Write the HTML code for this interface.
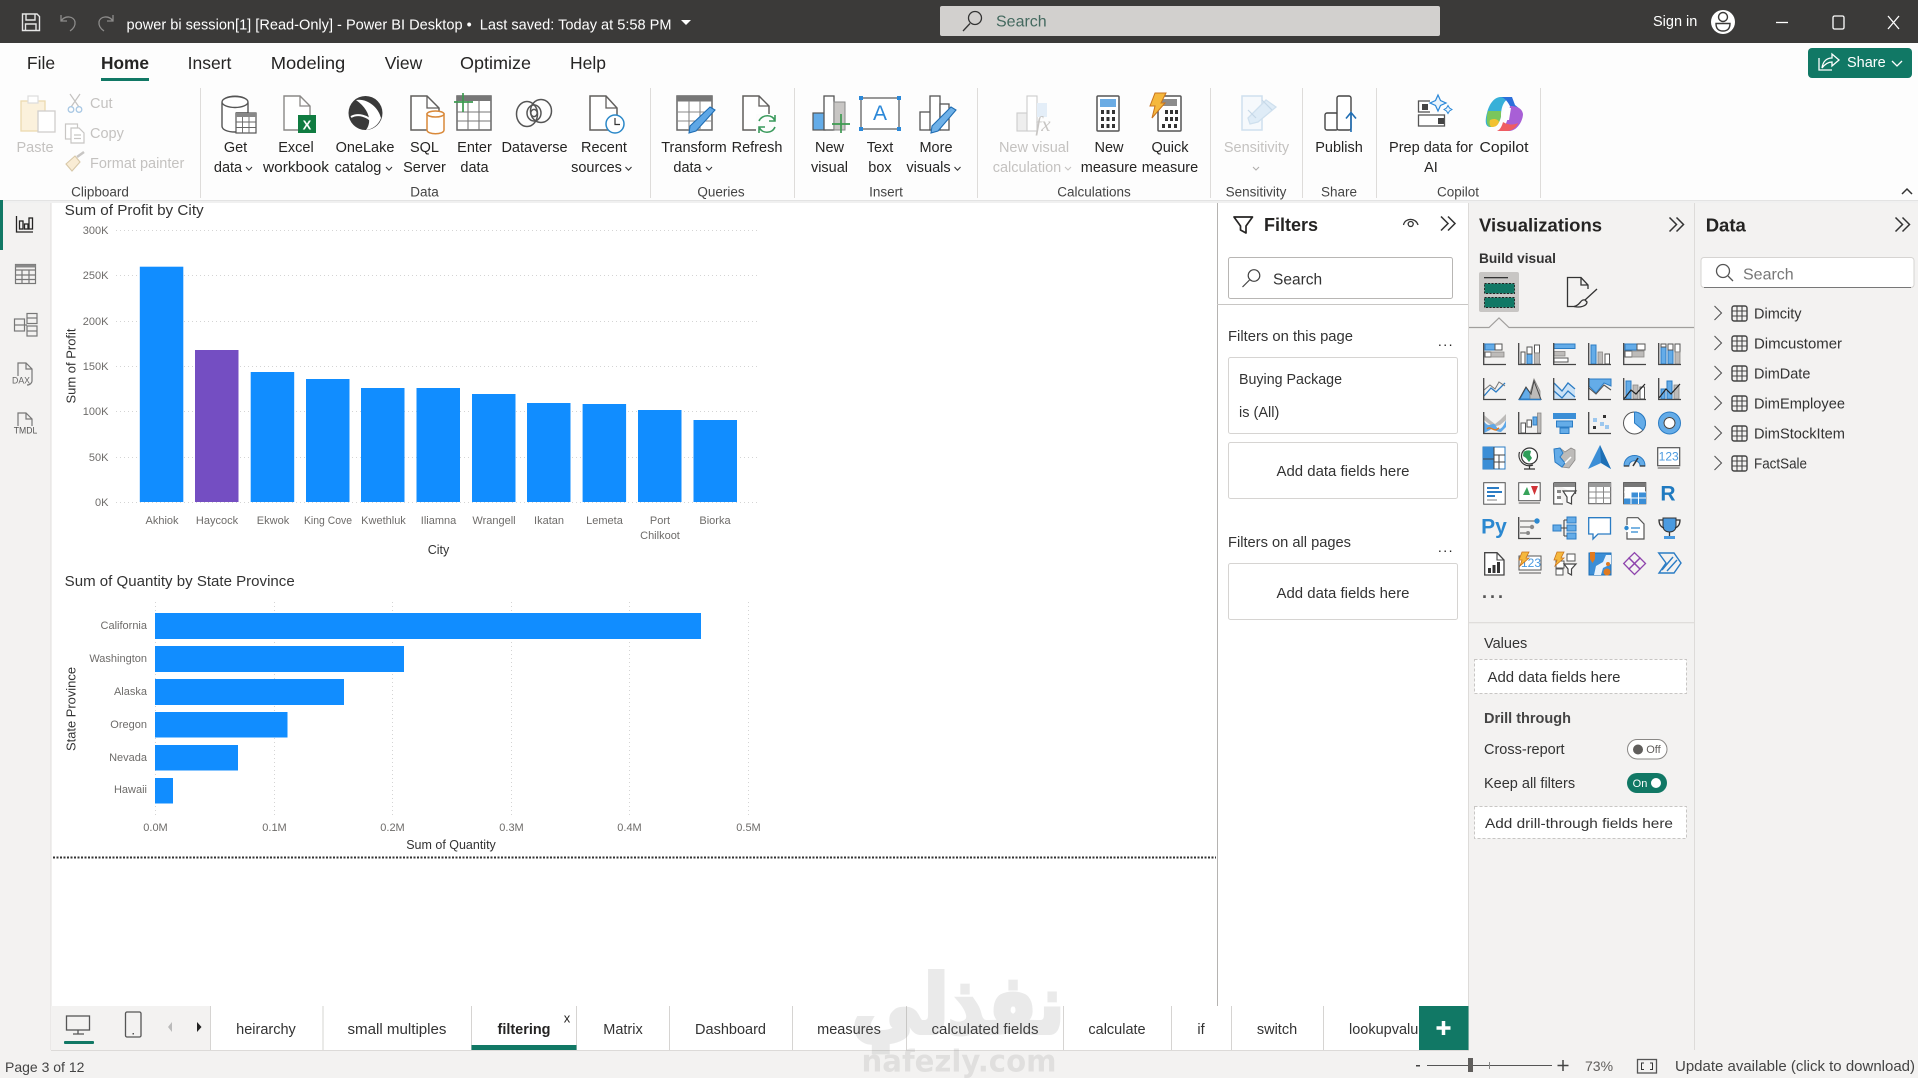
<!DOCTYPE html>
<html lang="en"><head><meta charset="utf-8"><title>Power BI Desktop</title>
<style>
html,body{margin:0;padding:0;background:#fff;width:1918px;height:1078px;overflow:hidden}
svg{display:block}
text{font-family:"Liberation Sans","DejaVu Sans",sans-serif;dominant-baseline:central;fill:#252423;font-size:14.5px}
text:not([transform]):not(.gl):not(.h):not(.at):not(.n){transform:translateY(1px)}
.m{text-anchor:middle}.e{text-anchor:end}
.d{fill:#c4c2c0}
.gl{font-size:13.5px;fill:#444}
.tab{font-size:14.5px;fill:#333;text-anchor:middle}
.ax{font-size:11px;fill:#6e6c6a}
.at{font-size:12.5px;fill:#333}
.ct{font-size:14.5px;fill:#333}
.h{font-weight:bold;font-size:18.5px;fill:#252423}
.f{font-size:14.5px;fill:#333}
.k{stroke:#444;fill:none;stroke-width:1.3}
.b{fill:#64ace8;stroke:#2b7cc4;stroke-width:1}
.g{fill:#bdbbb9;stroke:#8a8886;stroke-width:.8}
.w{fill:#fff;stroke:#555;stroke-width:1}
.gr{stroke:#d4d4d4;stroke-width:1;stroke-dasharray:1 3}
.bar{fill:#118dff}
.chev{fill:none;stroke:#333;stroke-width:1.1}
</style></head><body>
<svg xmlns="http://www.w3.org/2000/svg" width="1918" height="1078" viewBox="0 0 1918 1078">
<defs>
<path id="cv" d="M-3-2L0 1.2 3-2" class="chev"/>
<g id="tbl"><rect x="0" y="0" width="15" height="15" rx="2" fill="none" stroke="#444" stroke-width="1.4"/><path d="M0 5H15M0 10H15M5 0V15M10 0V15" stroke="#444" stroke-width="1.1"/></g>
<path id="dbl" d="M-7-7L0 0-7 7M0-7L7 0 0 7" fill="none" stroke="#333" stroke-width="1.5"/>
<path id="arr" d="M-3.5-7L3.5 0-3.5 7" fill="none" stroke="#555" stroke-width="1.1"/>
</defs>

<!-- base -->
<rect width="1918" height="1078" fill="#fff"/>
<rect x="0" y="0" width="1918" height="43" fill="#3b3a39"/>

<!-- side rail and panes -->
<rect x="0" y="200" width="51" height="850" fill="#f3f2f1"/>
<rect x="50.5" y="200" width="1" height="850" fill="#e1dfdd"/>
<rect x="1217" y="200" width="1" height="806" fill="#b5b3b1"/>
<rect x="1469" y="200" width="449" height="850" fill="#f3f2f1"/>
<rect x="1468" y="200" width="1" height="850" fill="#dddbd9"/>
<rect x="1694" y="200" width="1" height="850" fill="#dddbd9"/>
<rect x="0" y="1050" width="1918" height="28" fill="#f3f2f1"/>
<rect x="51" y="1050" width="1418" height="1" fill="#dcdad8"/>
<rect x="51" y="1006" width="160" height="44" fill="#f3f2f1"/>

<!-- ribbon -->
<rect x="0" y="43" width="1918" height="157" fill="#fdfdfd"/>
<rect x="0" y="200" width="1918" height="1" fill="#e3e3e3"/>
<rect x="0" y="201" width="1918" height="2" fill="#f0f0f0"/>

<!-- title bar -->
<g fill="none" stroke="#e6e6e6" stroke-width="1.4">
<path d="M22.5 14H37L39.5 16.5V30.5H22.5Z"/><path d="M26 14V20H35V14M25.5 30.5V24H36V30.5"/>
</g>
<g fill="none" stroke="#8d8c8b" stroke-width="1.3">
<path d="M61 15V21H67M61 21C65 15 74 16 75 22 75.5 26 73 29 70 31"/>
<path d="M113 15V21H107M113 21C109 15 100 16 99 22 98.5 26 101 29 104 31"/>
</g>
<text x="126.5" y="25" class="n" style="fill:#fff;font-size:15px" textLength="545" lengthAdjust="spacingAndGlyphs">power bi session[1] [Read-Only] - Power BI Desktop •&#160;&#160;Last saved: Today at 5:58 PM</text>
<path d="M681 20H691L686 25Z" fill="#fff"/>
<rect x="940" y="6" width="500" height="30" rx="2" fill="#d2d0ce"/>
<g fill="none" stroke="#333" stroke-width="1.3"><circle cx="975" cy="18" r="6.5"/><path d="M970 23.5L963 31"/></g>
<text x="996" y="22" class="n" style="font-size:16px;fill:#44695f">Search</text>
<text x="1653" y="22" class="n" style="fill:#fff;font-size:14.5px">Sign in</text>
<circle cx="1723" cy="22" r="12" fill="#fff"/>
<g fill="none" stroke="#3b3a39" stroke-width="1.4"><circle cx="1723" cy="17" r="4.5"/><path d="M1716 23.5H1730C1730 29 1727 31 1723 31S1716 29 1716 23.5Z"/></g>
<g stroke="#fff" stroke-width="1.3" fill="none">
<path d="M1776 22.5H1788"/><rect x="1833" y="16" width="11" height="13" rx="1.5"/><path d="M1888 16L1899 29M1899 16L1888 29"/>
</g>

<!-- tabs -->
<text x="41" y="63" class="m n" style="font-size:17.5px">File</text>
<text x="125" y="63" class="m n" style="font-size:17.5px;font-weight:bold" textLength="48" lengthAdjust="spacingAndGlyphs">Home</text>
<text x="209.5" y="63" class="m n" style="font-size:17.5px">Insert</text>
<text x="308" y="63" class="m n" style="font-size:17.5px" textLength="74.5" lengthAdjust="spacingAndGlyphs">Modeling</text>
<text x="403.5" y="63" class="m n" style="font-size:17.5px">View</text>
<text x="495.5" y="63" class="m n" style="font-size:17.5px" textLength="71" lengthAdjust="spacingAndGlyphs">Optimize</text>
<text x="588" y="63" class="m n" style="font-size:17.5px">Help</text>
<rect x="101" y="78" width="48" height="3" fill="#117865"/>

<!-- share -->
<rect x="1808" y="48" width="104" height="30" rx="4" fill="#117865"/>
<g fill="none" stroke="#fff" stroke-width="1.3"><path d="M1819 58V70H1832M1822 68C1823 61 1827 58 1832 58V54L1839 60 1832 66V62C1828 62 1825 64 1822 68Z"/><path d="M1892 61L1897 66 1902 61"/></g>
<text x="1847" y="63" class="n" style="fill:#fff;font-size:14.5px">Share</text>

<!-- ribbon dividers -->
<g fill="#dedcda">
<rect x="200" y="88" width="1" height="110"/><rect x="650" y="88" width="1" height="110"/><rect x="794" y="88" width="1" height="110"/>
<rect x="977" y="88" width="1" height="110"/><rect x="1210" y="88" width="1" height="110"/><rect x="1302" y="88" width="1" height="110"/>
<rect x="1376" y="88" width="1" height="110"/><rect x="1540" y="88" width="1" height="110"/>
</g>
<path d="M1902 194L1907 189 1912 194" fill="none" stroke="#333" stroke-width="1.5"/>

<!-- ribbon labels -->
<text x="35" y="147" class="m d">Paste</text>
<text x="90" y="103" class="d">Cut</text>
<text x="90" y="133" class="d">Copy</text>
<text x="90" y="163" class="d">Format painter</text>
<text x="100" y="192" class="m gl">Clipboard</text>
<text x="235.5" y="147" class="m">Get</text><text x="228" y="167" class="m">data</text><use href="#cv" x="249" y="169"/>
<text x="296" y="147" class="m">Excel</text><text x="296" y="167" class="m" textLength="66" lengthAdjust="spacingAndGlyphs">workbook</text>
<text x="365" y="147" class="m">OneLake</text><text x="358" y="167" class="m">catalog</text><use href="#cv" x="389" y="169"/>
<text x="424.5" y="147" class="m">SQL</text><text x="424.5" y="167" class="m">Server</text>
<text x="474.5" y="147" class="m">Enter</text><text x="474.5" y="167" class="m">data</text>
<text x="534.5" y="147" class="m">Dataverse</text>
<text x="604" y="147" class="m">Recent</text><text x="596.5" y="167" class="m">sources</text><use href="#cv" x="628.5" y="169"/>
<text x="424.5" y="192" class="m gl">Data</text>
<text x="694" y="147" class="m">Transform</text><text x="687.5" y="167" class="m">data</text><use href="#cv" x="709" y="169"/>
<text x="757" y="147" class="m">Refresh</text>
<text x="721" y="192" class="m gl">Queries</text>
<text x="829.5" y="147" class="m">New</text><text x="829.5" y="167" class="m">visual</text>
<text x="880" y="147" class="m">Text</text><text x="880" y="167" class="m">box</text>
<text x="936" y="147" class="m">More</text><text x="928.5" y="167" class="m">visuals</text><use href="#cv" x="957.5" y="169"/>
<text x="886" y="192" class="m gl">Insert</text>
<text x="1034" y="147" class="m d">New visual</text><text x="1027" y="167" class="m d">calculation</text>
<path d="M1065 167L1068 170 1071 167" fill="none" stroke="#c4c2c0" stroke-width="1.1"/>
<text x="1109" y="147" class="m">New</text><text x="1109" y="167" class="m">measure</text>
<text x="1170" y="147" class="m">Quick</text><text x="1170" y="167" class="m">measure</text>
<text x="1094" y="192" class="m gl">Calculations</text>
<text x="1256.5" y="147" class="m d">Sensitivity</text>
<path d="M1253 167L1256 170 1259 167" fill="none" stroke="#b0aeac" stroke-width="1.1"/>
<text x="1256" y="192" class="m gl">Sensitivity</text>
<text x="1339" y="147" class="m">Publish</text><text x="1339" y="192" class="m gl">Share</text>
<text x="1431" y="147" class="m" textLength="84" lengthAdjust="spacingAndGlyphs">Prep data for</text><text x="1431" y="167" class="m">AI</text>
<text x="1504" y="147" class="m" textLength="49" lengthAdjust="spacingAndGlyphs">Copilot</text><text x="1458" y="192" class="m gl">Copilot</text>

<!-- clipboard icons -->
<rect x="21" y="101" width="24" height="30" fill="#fbf1dc" stroke="#ecd9b0" stroke-width="1.3"/>
<rect x="28" y="96" width="10" height="7" fill="#fff" stroke="#ddd" stroke-width="1.2"/>
<rect x="38" y="111" width="17" height="21" fill="#fff" stroke="#d0cecc" stroke-width="1.3"/>
<g fill="none" stroke="#c4c2c0" stroke-width="1.2"><path d="M70 94L79 107M80 94L71 107"/></g>
<g fill="none" stroke="#a9c8e4" stroke-width="1.3"><circle cx="71" cy="109.5" r="2.8"/><circle cx="79" cy="109.5" r="2.8"/></g>
<g fill="#fff" stroke="#c8c6c4" stroke-width="1.2"><rect x="65.5" y="124" width="12" height="15"/><path d="M71 128H79L84 133V143H71Z"/><path d="M74 135H81M74 138.5H81" fill="none"/></g>
<path d="M66 164L75 156 80 162 72 171Z" fill="#f9ecd4" stroke="#d8c8a8" stroke-width="1.1"/><path d="M77 157L84 152" stroke="#c8c6c4" stroke-width="2.5"/>

<!-- Get data -->
<g fill="#fff" stroke="#555" stroke-width="1.4"><path d="M222 103V126C222 130 228 132 235 132H240V103"/><path d="M222 103C222 94 248 94 248 103V113H236"/><ellipse cx="235" cy="102" rx="13" ry="5.5"/></g>
<rect x="236" y="113" width="20" height="20" fill="#fff" stroke="#555" stroke-width="1.2"/><rect x="236" y="113" width="20" height="4" fill="#888"/><path d="M236 122H256M236 127.5H256M242.5 117V133M249 117V133" stroke="#666" stroke-width=".9"/>
<!-- Excel -->
<path d="M284 96H300L310 106V130H284Z" fill="#fff" stroke="#8a8886" stroke-width="1.4"/><path d="M300 96V106H310" fill="none" stroke="#8a8886" stroke-width="1.3"/>
<rect x="298" y="115" width="18" height="18" fill="#107c41"/><text x="307" y="124" class="m" style="fill:#fff;font-size:13px;font-weight:bold">X</text>
<!-- OneLake -->
<circle cx="365.5" cy="113" r="17" fill="#3a3a3a"/>
<path d="M356 100C366 98 378 106 381 118 378 126 372 129 366 130 372 122 370 110 356 100Z" fill="#fff"/>
<path d="M351 117C358 113 368 116 372 122" fill="none" stroke="#fff" stroke-width="2"/>
<!-- SQL -->
<path d="M411 96H427L439 108V130H411Z" fill="#fff" stroke="#605e5c" stroke-width="1.5"/><path d="M427 96V108H439" fill="none" stroke="#605e5c" stroke-width="1.3"/>
<path d="M427 114V130C427 135 444 135 444 130V114Z" fill="#fff" stroke="#d9893a" stroke-width="1.5"/><ellipse cx="435.5" cy="114" rx="8.5" ry="3" fill="#fff" stroke="#d9893a" stroke-width="1.5"/>
<!-- Enter data -->
<rect x="457" y="96" width="34" height="34" fill="#fff" stroke="#666" stroke-width="1.5"/><rect x="457" y="96" width="34" height="5" fill="#777"/>
<path d="M457 112H491M457 121H491M468 101V130M479 101V130" stroke="#777" stroke-width="1.1"/>
<path d="M463 93V112M454 102H473" stroke="#3d9a50" stroke-width="1.7"/>
<!-- Dataverse -->
<g fill="none" stroke="#555" stroke-width="1.5"><ellipse cx="527" cy="114" rx="10.5" ry="12.5"/><ellipse cx="541" cy="111" rx="10.5" ry="11.5"/><ellipse cx="534" cy="113" rx="7" ry="8"/><ellipse cx="534" cy="113" rx="3.2" ry="3.6"/></g>
<!-- Recent -->
<path d="M590 96H606L617 108V130H590Z" fill="#fff" stroke="#605e5c" stroke-width="1.5"/><path d="M606 96V108H617" fill="none" stroke="#605e5c" stroke-width="1.3"/>
<circle cx="615" cy="124" r="9" fill="#fff" stroke="#2b88c8" stroke-width="1.5"/><path d="M615 118V124.5H620" fill="none" stroke="#333" stroke-width="1.2"/>
<!-- Transform -->
<rect x="677" y="96" width="35" height="34" fill="#fff" stroke="#666" stroke-width="1.5"/><rect x="677" y="96" width="35" height="5.5" fill="#777"/>
<path d="M677 112H712M677 121H712M689 101V130M700 101V130" stroke="#888" stroke-width="1.1"/>
<path d="M710 107L715 110 696 131 689 133 690 126Z" fill="#5ea7e6" stroke="#1f6db3" stroke-width="1.1"/>
<!-- Refresh -->
<path d="M743 96H759L769 106V130H743Z" fill="#fff" stroke="#605e5c" stroke-width="1.5"/><path d="M759 96V106H769" fill="none" stroke="#605e5c" stroke-width="1.3"/>
<rect x="756" y="114" width="22" height="20" fill="#fdfdfd"/>
<g fill="none" stroke="#3a9a5c" stroke-width="1.6"><path d="M759 121C762 114 773 114 775 121M775 127C772 134 762 134 759 127M775 115V121H769M759 133V127H765"/></g>

<!-- New visual -->
<rect x="813" y="113" width="12" height="17" fill="#64ace8" stroke="#555" stroke-width="1.2"/>
<rect x="824" y="96" width="10" height="34" fill="#fff" stroke="#555" stroke-width="1.3"/>
<rect x="834" y="102" width="11" height="28" fill="#c8c6c4" stroke="#888" stroke-width="1"/>
<path d="M841 114V133M832 124H850" stroke="#3d9a50" stroke-width="1.7"/>
<!-- Text box -->
<rect x="861" y="98" width="38" height="31" fill="#fff" stroke="#555" stroke-width="1.2"/>
<g fill="#2b88d8"><rect x="859" y="96" width="4" height="4"/><rect x="897" y="96" width="4" height="4"/><rect x="859" y="127" width="4" height="4"/><rect x="897" y="127" width="4" height="4"/></g>
<text x="880" y="112.5" class="m" style="font-size:21px;fill:#2b88d8">A</text>
<!-- More visuals -->
<g fill="#fff" stroke="#555" stroke-width="1.3"><rect x="920" y="112" width="11" height="18"/><rect x="930" y="96" width="10" height="34"/><rect x="940" y="104" width="9" height="26"/></g>
<path d="M951 107L956 110 938 131 931 133 932 126Z" fill="#6fb1e8" stroke="#1f6db3" stroke-width="1.1"/>
<!-- New visual calc (disabled) -->
<rect x="1017" y="113" width="11" height="18" fill="#eee" stroke="#ccc" stroke-width="1.1"/>
<rect x="1027" y="96" width="10" height="35" fill="#fff" stroke="#ccc" stroke-width="1.1"/>
<rect x="1037" y="103" width="10" height="14" fill="#e4eef8"/>
<text x="1043" y="123" class="m" style="font-family:'Liberation Serif',serif;font-style:italic;font-size:21px;fill:#c8c6c4">fx</text>
<!-- Calculator -->
<rect x="1097" y="96" width="22" height="35" rx="1" fill="#fff" stroke="#555" stroke-width="1.5"/>
<rect x="1100" y="99" width="16" height="8" fill="#6bace4"/>
<g fill="#333"><rect x="1101" y="110" width="3" height="4"/><rect x="1106.5" y="110" width="3" height="4"/><rect x="1112" y="110" width="3" height="4"/><rect x="1101" y="117" width="3" height="4"/><rect x="1106.5" y="117" width="3" height="4"/><rect x="1112" y="117" width="3" height="4"/><rect x="1101" y="124" width="3" height="4"/><rect x="1106.5" y="124" width="3" height="4"/><rect x="1112" y="124" width="3" height="4"/></g>
<!-- Quick measure -->
<rect x="1158" y="96" width="23" height="35" rx="1" fill="#fff" stroke="#555" stroke-width="1.5"/>
<rect x="1162" y="99" width="15" height="7" fill="#8c8c8c"/>
<g fill="#333"><rect x="1165" y="110" width="3" height="4"/><rect x="1170" y="110" width="3" height="4"/><rect x="1175" y="110" width="3" height="4"/><rect x="1165" y="117" width="3" height="4"/><rect x="1170" y="117" width="3" height="4"/><rect x="1175" y="117" width="3" height="4"/><rect x="1162" y="124" width="3" height="4"/><rect x="1168" y="124" width="3" height="4"/><rect x="1174" y="124" width="3" height="4"/></g>
<path d="M1155 93H1166L1161 103H1165L1152 118 1155 106H1150Z" fill="#f5b83d" stroke="#c9741d" stroke-width="1"/>
<!-- Sensitivity -->
<path d="M1242 96H1262V130H1242Z" fill="#f6f9fc" stroke="#cfe0ee" stroke-width="1.5"/>
<path d="M1248 118L1266 100 1276 107 1258 122 1250 124Z" fill="#dfecf7" stroke="#cfe0ee" stroke-width="1.3"/>
<path d="M1262 100L1272 110M1248 110L1256 118" stroke="#c5d8e8" stroke-width="1.2"/>
<!-- Publish -->
<g fill="#fff" stroke="#444" stroke-width="1.4"><rect x="1325" y="113" width="13" height="17" rx="2"/><rect x="1337" y="96" width="14" height="34" rx="2"/></g>
<path d="M1351 132V113M1346 118.5L1351 112.5 1356 118.5" fill="none" stroke="#1f6db3" stroke-width="1.6"/>
<!-- Prep data -->
<g fill="#fff" stroke="#555" stroke-width="1.3"><rect x="1418.5" y="101" width="26" height="11"/><rect x="1418.5" y="115" width="26" height="11"/></g>
<rect x="1422" y="104" width="6" height="6" fill="#444"/><rect x="1438" y="118" width="6" height="6" fill="#444"/>
<rect x="1430" y="96" width="20" height="18" fill="#fdfdfd"/>
<path d="M1438 95L1440.5 100.5 1446 103 1440.5 105.5 1438 111 1435.5 105.5 1430 103 1435.5 100.5Z" fill="#eaf4fc" stroke="#2b88d8" stroke-width="1.2"/>
<path d="M1448 105.5L1449.5 108 1452 109.5 1449.5 111 1448 113.5 1446.5 111 1444 109.5 1446.5 108Z" fill="#eaf4fc" stroke="#2b88d8" stroke-width="1"/>
<!-- Copilot -->
<g>
<path d="M1500 97H1512C1504 99 1501 107 1501 116 1500 122 1497 127 1490 127 1485 127 1485 120 1487 113 1489 105 1493 98 1500 97Z" fill="#37b0d8"/>
<path d="M1488 111C1486 118 1486 127 1491 127 1497 127 1500 122 1501 116V111Z" fill="#7ac65c"/>
<path d="M1490 120C1489 123 1490 127 1492 127 1496 127 1498 125 1499 122 1498 119 1494 118 1490 120Z" fill="#f2c230"/>
<path d="M1501 97H1512L1515 105 1520 109 1511 108C1508 102 1505 98 1501 97Z" fill="#2c6fdb"/>
<path d="M1510 106C1514 106 1522 107 1523 114 1523 120 1518 130 1510 131L1497 131C1505 130 1508 120 1509 112Z" fill="#a85fd6"/>
<path d="M1497 131H1508C1514 130 1517 126 1518 123 1512 126 1506 124 1503 122 1502 126 1500 130 1497 131Z" fill="#ef5d62"/>
<path d="M1504 108H1511L1509 120 1502 120Z" fill="#fff"/>
</g>

<!-- left rail -->
<rect x="0" y="200" width="3" height="50" fill="#117865"/>
<g fill="none" stroke="#252423" stroke-width="1.3"><path d="M16.5 216V232H33"/><rect x="19.5" y="221" width="3.5" height="8"/><rect x="24.5" y="224" width="3.5" height="5"/><rect x="29" y="218" width="3.5" height="11"/></g>
<g fill="none" stroke="#777" stroke-width="1.2"><rect x="15.5" y="264.5" width="20" height="19"/><path d="M15.5 270H35.5M15.5 275H35.5M15.5 279.5H35.5M22 270V283.5M29 270V283.5"/></g>
<rect x="15.5" y="264.5" width="20" height="3" fill="#888"/>
<g fill="#f3f2f1" stroke="#777" stroke-width="1.2"><rect x="14.5" y="319" width="10" height="12"/><path d="M14.5 325H24.5"/><rect x="27" y="313.5" width="10" height="10"/><path d="M27 318H37"/><rect x="27" y="326" width="10" height="10"/><path d="M27 331H37"/><path d="M24.5 325H27" fill="none"/></g>
<g fill="none" stroke="#777" stroke-width="1.2"><path d="M18 376V363H26L32 369V381C32 383 30 385 27 385M26 363V369H32"/></g>
<text x="21" y="381" class="m n" style="font-size:9.5px;fill:#666" textLength="18" lengthAdjust="spacingAndGlyphs">DAX</text>
<g fill="none" stroke="#777" stroke-width="1.2"><path d="M18 426V413H26L32 419V426M26 413V419H32"/></g>
<text x="25.5" y="431" class="m n" style="font-size:9.5px;fill:#555" textLength="23.5" lengthAdjust="spacingAndGlyphs">TMDL</text>

<!-- chart 1 -->
<text x="64.7" y="210" class="ct" textLength="139" lengthAdjust="spacingAndGlyphs">Sum of Profit by City</text>
<g><path class="gr" d="M116 230.5H759"/><path class="gr" d="M116 275.5H759"/><path class="gr" d="M116 321.5H759"/><path class="gr" d="M116 366.5H759"/><path class="gr" d="M116 411.5H759"/><path class="gr" d="M116 457.5H759"/><path class="gr" d="M116 502.5H759"/></g>
<text x="108.5" y="230" class="e ax">300K</text><text x="108.5" y="275" class="e ax">250K</text><text x="108.5" y="321" class="e ax">200K</text><text x="108.5" y="366" class="e ax">150K</text><text x="108.5" y="411" class="e ax">100K</text><text x="108.5" y="457" class="e ax">50K</text><text x="108.5" y="502" class="e ax">0K</text>
<rect class="bar" x="139.8" y="266.7" width="43.5" height="235.3"/>
<rect x="195" y="350" width="43.5" height="152" fill="#744ec2"/>
<rect class="bar" x="250.7" y="372" width="43.5" height="130"/>
<rect class="bar" x="306" y="379" width="43.5" height="123"/>
<rect class="bar" x="361" y="388" width="43.5" height="114"/>
<rect class="bar" x="416.5" y="388" width="43.5" height="114"/>
<rect class="bar" x="472" y="394" width="43.5" height="108"/>
<rect class="bar" x="527" y="403" width="43.5" height="99"/>
<rect class="bar" x="582.6" y="404" width="43.5" height="98"/>
<rect class="bar" x="638" y="410" width="43.5" height="92"/>
<rect class="bar" x="693.5" y="420" width="43.5" height="82"/>
<text x="162" y="520" class="m ax">Akhiok</text><text x="217" y="520" class="m ax">Haycock</text><text x="273" y="520" class="m ax">Ekwok</text><text x="328" y="520" class="m ax" textLength="48" lengthAdjust="spacingAndGlyphs">King Cove</text><text x="383.5" y="520" class="m ax">Kwethluk</text><text x="438.5" y="520" class="m ax">Iliamna</text><text x="494" y="520" class="m ax">Wrangell</text><text x="549" y="520" class="m ax">Ikatan</text><text x="604.5" y="520" class="m ax">Lemeta</text><text x="660" y="520" class="m ax">Port</text><text x="660" y="535" class="m ax">Chilkoot</text><text x="715" y="520" class="m ax">Biorka</text>
<text x="438.5" y="550" class="m at">City</text>
<text transform="translate(71.6 366) rotate(-90)" class="m at" textLength="75" lengthAdjust="spacingAndGlyphs">Sum of Profit</text>

<!-- chart 2 -->
<text x="64.7" y="581" class="ct" textLength="230" lengthAdjust="spacingAndGlyphs">Sum of Quantity by State Province</text>
<path class="gr" d="M155.5 602V815M274.5 602V815M392.5 602V815M511.5 602V815M629.5 602V815M748.5 602V815"/>
<rect class="bar" x="155" y="613" width="546" height="26"/>
<rect class="bar" x="155" y="646" width="249" height="26"/>
<rect class="bar" x="155" y="679" width="189" height="26"/>
<rect class="bar" x="155" y="712" width="132.5" height="25.5"/>
<rect class="bar" x="155" y="745" width="83" height="25.5"/>
<rect class="bar" x="155" y="778" width="18" height="25.5"/>
<text x="147" y="626" class="e ax n">California</text><text x="147" y="659" class="e ax n">Washington</text><text x="147" y="692" class="e ax n">Alaska</text><text x="147" y="725" class="e ax n">Oregon</text><text x="147" y="758" class="e ax n">Nevada</text><text x="147" y="790" class="e ax n">Hawaii</text>
<text x="155.5" y="827" class="m ax">0.0M</text><text x="274.5" y="827" class="m ax">0.1M</text><text x="392.5" y="827" class="m ax">0.2M</text><text x="511.5" y="827" class="m ax">0.3M</text><text x="629.5" y="827" class="m ax">0.4M</text><text x="748.5" y="827" class="m ax">0.5M</text>
<text x="451" y="845" class="m at">Sum of Quantity</text>
<text transform="translate(71.6 709) rotate(-90)" class="m at" textLength="84" lengthAdjust="spacingAndGlyphs">State Province</text>
<path d="M53 857.5H1216" stroke="#333" stroke-width="2" stroke-dasharray="2 1.5"/>

<!-- page tabs -->
<g fill="none" stroke="#555" stroke-width="1.3"><rect x="66.5" y="1016" width="23" height="14"/><path d="M78 1030V1034M73 1034H84"/></g>
<rect x="64" y="1041" width="30" height="3" rx="1" fill="#117865"/>
<rect x="125.5" y="1012" width="15.5" height="25" rx="1.5" fill="none" stroke="#555" stroke-width="1.3"/><rect x="132.5" y="1033" width="1.5" height="1.5" fill="#555"/>
<path d="M172 1022V1032L168 1027Z" fill="#bbb"/>
<path d="M197 1022V1032L201.5 1027Z" fill="#222"/>
<g fill="#d6d4d2"><rect x="210" y="1006" width="1" height="44"/><rect x="322.5" y="1006" width="1" height="44"/><rect x="471" y="1006" width="1" height="44"/><rect x="576" y="1006" width="1" height="44"/><rect x="669" y="1006" width="1" height="44"/><rect x="792" y="1006" width="1" height="44"/><rect x="906" y="1006" width="1" height="44"/><rect x="1063" y="1006" width="1" height="44"/><rect x="1171" y="1006" width="1" height="44"/><rect x="1231" y="1006" width="1" height="44"/><rect x="1323" y="1006" width="1" height="44"/></g>
<text x="266" y="1029" class="tab">heirarchy</text>
<text x="397" y="1029" class="tab" textLength="99" lengthAdjust="spacingAndGlyphs">small multiples</text>
<text x="524" y="1029" class="tab" style="font-weight:bold;fill:#252423" textLength="53" lengthAdjust="spacingAndGlyphs">filtering</text>
<text x="567" y="1018" class="m n" style="font-size:13px">x</text>
<rect x="471.5" y="1045" width="105" height="5" fill="#117865"/>
<text x="623" y="1029" class="tab">Matrix</text>
<text x="730.5" y="1029" class="tab">Dashboard</text>
<text x="849" y="1029" class="tab">measures</text>
<text x="985" y="1029" class="tab" textLength="107" lengthAdjust="spacingAndGlyphs">calculated fields</text>
<text x="1117" y="1029" class="tab">calculate</text>
<text x="1201" y="1029" class="tab">if</text>
<text x="1277" y="1029" class="tab">switch</text>
<text x="1349" y="1029" style="font-size:14.5px;fill:#333">lookupvalue</text>
<rect x="1419" y="1006" width="49.5" height="44" fill="#117865"/>
<path d="M1443.5 1021V1035M1436.5 1028H1450.5" stroke="#fff" stroke-width="3.5"/>

<!-- status bar -->
<text x="5" y="1067" class="n" style="font-size:14px;fill:#444">Page 3 of 12</text>
<rect x="1416" y="1065" width="4" height="1.5" fill="#444"/>
<rect x="1427" y="1065" width="125" height="1" fill="#555"/>
<rect x="1468" y="1058" width="5" height="14" fill="#605e5c"/>
<rect x="1489" y="1062" width="1" height="7" fill="#888"/>
<path d="M1563 1060V1071M1557.5 1065.5H1568.5" stroke="#444" stroke-width="1.5"/>
<text x="1585" y="1066" class="n" style="font-size:14px;fill:#605e5c">73%</text>
<rect x="1637.5" y="1059.5" width="19" height="13.5" fill="none" stroke="#555" stroke-width="1.3"/>
<path d="M1644 1063H1641.5V1069.5H1644M1650 1063H1652.5V1069.5H1650" fill="none" stroke="#333" stroke-width="1"/>
<text x="1675" y="1067" class="n" style="fill:#444;font-size:14.5px" textLength="240" lengthAdjust="spacingAndGlyphs">Update available (click to download)</text>

<!-- filters pane -->
<path d="M1234 217H1252.5L1246 226V233L1240.5 230V226Z" fill="none" stroke="#252423" stroke-width="1.7" stroke-linejoin="round"/>
<text x="1264" y="225" class="h" style="font-size:18px">Filters</text>
<g fill="none" stroke="#333" stroke-width="1.3"><path d="M1403.5 225C1405 217.5 1416 217.5 1418 225"/><circle cx="1410.7" cy="224" r="2.5"/></g>
<use href="#dbl" x="1448" y="223.5"/>
<rect x="1228.5" y="257.5" width="224" height="41" rx="2" fill="#fff" stroke="#b8b6b4"/>
<g fill="none" stroke="#444" stroke-width="1.2"><circle cx="1254" cy="275.5" r="5.8"/><path d="M1249.5 280L1242.5 287"/></g>
<text x="1273" y="279" style="font-size:15.5px;fill:#333">Search</text>
<rect x="1217" y="304" width="251" height="1" fill="#c8c6c4"/>
<text x="1228" y="336" class="f" textLength="125" lengthAdjust="spacingAndGlyphs">Filters on this page</text>
<text x="1446" y="340" class="m" style="font-size:14px;letter-spacing:1.5px">...</text>
<rect x="1228.5" y="357.5" width="229" height="76" rx="2" fill="#fff" stroke="#d6d4d2"/>
<text x="1239" y="379" class="f" textLength="103" lengthAdjust="spacingAndGlyphs">Buying Package</text>
<text x="1239" y="412" class="f">is (All)</text>
<rect x="1228.5" y="442.5" width="229" height="56" rx="2" fill="#fff" stroke="#d6d4d2"/>
<text x="1343" y="471" class="m f" textLength="133" lengthAdjust="spacingAndGlyphs">Add data fields here</text>
<text x="1228" y="542" class="f" textLength="123" lengthAdjust="spacingAndGlyphs">Filters on all pages</text>
<text x="1446" y="546" class="m" style="font-size:14px;letter-spacing:1.5px">...</text>
<rect x="1228.5" y="563.5" width="229" height="56" rx="2" fill="#fff" stroke="#d6d4d2"/>
<text x="1343" y="593" class="m f" textLength="133" lengthAdjust="spacingAndGlyphs">Add data fields here</text>

<!-- viz pane -->
<text x="1479" y="225" class="h">Visualizations</text>
<use href="#dbl" x="1676.5" y="224.5"/>
<text x="1705.7" y="225" class="h">Data</text>
<use href="#dbl" x="1902.5" y="224.5"/>
<text x="1479" y="258" class="n" style="font-size:14px;font-weight:bold;fill:#333" textLength="77" lengthAdjust="spacingAndGlyphs">Build visual</text>
<rect x="1479" y="272" width="40" height="40" rx="2" fill="#c8c6c4"/>
<rect x="1484" y="277" width="24" height="1.3" fill="#333"/>
<rect x="1484.5" y="283.5" width="30" height="10" fill="#117865" stroke="#222" stroke-width=".9" stroke-dasharray="2 1.5"/>
<rect x="1484.5" y="297.5" width="30" height="10" fill="#117865" stroke="#222" stroke-width=".9" stroke-dasharray="2 1.5"/>
<g fill="none" stroke="#333" stroke-width="1.3"><path d="M1575 306.5H1567.5V277.5H1581L1588 285V289M1581 277.5V285H1588"/><path d="M1597 289L1585 300"/><path d="M1585 300C1580 299 1581 305 1574 306.5 1580 308 1587 306 1587 302Z"/></g>
<path d="M1469 327.5H1489L1499 318 1509 327.5H1694" fill="none" stroke="#a19f9d" stroke-width="1.2"/>

<!-- viz icons row 1 -->
<g transform="translate(1483 343)"><rect x="2" y="1" width="10" height="6" class="b"/><rect x="12" y="1" width="7" height="6" class="w"/><rect x="2" y="9" width="6" height="5" class="w"/><rect x="8" y="9" width="13" height="5" class="g"/><path class="k" d="M.7 0V21.5H23"/></g>
<g transform="translate(1518 343)"><rect x="3" y="9" width="4" height="12" class="w"/><rect x="9" y="11" width="5" height="10" class="b"/><rect x="9" y="4" width="5" height="7" class="w"/><rect x="16.5" y="2" width="5" height="8" class="w"/><rect x="16.5" y="10" width="5" height="11" class="g"/><path class="k" d="M.7 0V21.5H23"/></g>
<g transform="translate(1553 343)"><rect x="1" y="1" width="21" height="4.5" class="b"/><rect x="1" y="8.5" width="11" height="4.5" class="g"/><rect x="1" y="15" width="14" height="4" class="w"/><path class="k" d="M.7 0V21.5H23"/></g>
<g transform="translate(1588 343)"><rect x="3" y="2" width="5" height="19" class="b"/><rect x="10" y="9" width="4.5" height="12" class="g"/><rect x="17" y="11" width="4.5" height="10" class="w"/><path class="k" d="M.7 0V21.5H23"/></g>
<g transform="translate(1623 343)"><rect x="2" y="1" width="12" height="6" class="b"/><rect x="14" y="1" width="8" height="6" class="w"/><rect x="2" y="8" width="7" height="6" class="w"/><rect x="9" y="8" width="12" height="6" class="g"/><path class="k" d="M.7 0V21.5H23"/></g>
<g transform="translate(1658 343)"><rect x="3" y="4" width="5" height="17" class="b"/><rect x="3" y="1" width="5" height="3" class="w"/><rect x="10" y="7" width="5" height="14" class="b"/><rect x="10" y="1" width="5" height="6" class="w"/><rect x="17" y="1" width="5" height="8" class="w"/><rect x="17" y="9" width="5" height="12" class="g"/><path class="k" d="M.7 0V21.5H23"/></g>
<!-- row 2 -->
<g transform="translate(1483 378)"><path d="M1 18L8 10 13 14 22 5" fill="none" stroke="#2b7cc4" stroke-width="1.3"/><path d="M1 12L7 7 12 11 16 4 22 8" fill="none" stroke="#777" stroke-width="1"/><path class="k" d="M.7 0V21.5H23"/></g>
<g transform="translate(1518 378)"><path d="M2 21L8 10 12 15V21Z" class="b"/><path d="M12 15L16 1 22 13V21H12Z" class="g"/><path d="M1 21.5L8 9 13 16 16 3 23 21.5H1Z" fill="none" stroke="#444" stroke-width="1"/><path d="M.7 21.5H23" stroke="#2b7cc4" stroke-width="1.4"/></g>
<g transform="translate(1553 378)"><path d="M1 6L9 13 15 6 22 12V21H1Z" fill="#cbe2f6"/><path d="M1 5L9 13 15 5 22 11M1 13L9 20 15 13 22 19" fill="none" stroke="#2b7cc4" stroke-width="1.3"/><path class="k" d="M.7 0V21.5H23"/></g>
<g transform="translate(1588 378)"><path d="M1 1H23V8L16 5 8 15 1 8Z" class="b"/><path d="M1 10L8 16 16 7 23 12" fill="none" stroke="#555" stroke-width="1.1"/><path class="k" d="M.7 0V21.5H23"/></g>
<g transform="translate(1623 378)"><rect x="3" y="3" width="5" height="18" class="b"/><rect x="10" y="7" width="5" height="14" class="g"/><rect x="17" y="9" width="4.5" height="12" class="w"/><path d="M1 21L8 12 13 16 22 6" fill="none" stroke="#222" stroke-width="1.2"/><path class="k" d="M.7 0V21.5H23"/></g>
<g transform="translate(1658 378)"><rect x="3" y="11" width="4" height="10" class="b"/><rect x="9" y="3" width="5" height="18" class="b"/><rect x="16" y="7" width="5" height="14" class="g"/><path d="M1 20L8 11 13 16 22 6" fill="none" stroke="#222" stroke-width="1.2"/><path class="k" d="M.7 0V21.5H23"/></g>
<!-- row 3 -->
<g transform="translate(1483 412)"><path d="M1 3L8 9 12 12 17 8 23 2V8L17 13 10 15 1 8Z" fill="#bdbbb9"/><path d="M1 9C6 18 10 8 13 14S20 16 23 8V15L18 20C12 20 10 15 7 18L1 21Z" fill="#5fa8e8"/><path d="M4 17C7 14 9 18 13 18L16 16" fill="none" stroke="#e07a20" stroke-width="1.4"/><path class="k" d="M.7 0V21.5H23"/></g>
<g transform="translate(1518 412)"><rect x="3" y="11" width="4.5" height="10" class="w"/><rect x="9" y="8" width="4.5" height="7" class="w"/><rect x="15" y="5" width="4" height="8" class="b"/><rect x="19.5" y="1" width="3.5" height="20" class="g"/><path class="k" d="M.7 0V21.5H23"/></g>
<g transform="translate(1553 412)"><rect x="0" y="1" width="23" height="6" fill="#3b8ed6"/><rect x="3.5" y="9" width="16" height="6" class="b"/><rect x="7" y="16" width="9" height="5.5" class="b"/></g>
<g transform="translate(1588 412)"><g fill="#9cc7ee"><rect x="5" y="6" width="4" height="4"/><rect x="12" y="10" width="4" height="4"/><rect x="17" y="13" width="4" height="4"/></g><g fill="#333"><rect x="5" y="14" width="3" height="3"/><rect x="15" y="3" width="3" height="3"/></g><path class="k" d="M.7 0V21.5H23"/></g>
<g transform="translate(1623 412)"><circle cx="11.5" cy="11" r="11" class="w" stroke-width="1.2"/><path d="M11.5 0A11 11 0 0 1 20 18L11.5 11Z" class="b"/></g>
<g transform="translate(1658 412)"><circle cx="11.5" cy="11" r="8.5" fill="none" stroke="#64ace8" stroke-width="5"/><circle cx="11.5" cy="11" r="11" fill="none" stroke="#2b7cc4" stroke-width="1"/><circle cx="11.5" cy="11" r="5.5" fill="#fff" stroke="#444" stroke-width="1"/></g>
<!-- row 4 -->
<g transform="translate(1483 447)"><rect x="0" y="0" width="22" height="22" fill="#fff" stroke="#2b7cc4"/><rect x="0" y="0" width="11" height="12" fill="#3b8ed6"/><rect x="0" y="12" width="11" height="10" fill="#3b8ed6"/><path d="M11 0V22M11 8H22M16 8V22M11 15H22M0 12H11" stroke="#444" stroke-width="1"/></g>
<g transform="translate(1518 447)"><circle cx="11.5" cy="9" r="8" fill="#fff" stroke="#333" stroke-width="1.2"/><path d="M5.5 5C8 3 11 3 13 4L12 8 14 11 11 15 8 11 5 9Z" fill="#2f9e5a"/><path d="M1.5 5C-1 13 6 21 15 18M11.5 19V22M6 22H17" fill="none" stroke="#333" stroke-width="1.2"/></g>
<g transform="translate(1553 447)"><path d="M1 2L7 1 12 5 18 1 22 3 22 13 16 21 9 20 2 15Z" class="g"/><path d="M1 2L7 1 10 6 7 10 12 16 9 20 2 15Z" class="b"/><path d="M12 16L18 10" stroke="#fff" stroke-width="1.5"/></g>
<g transform="translate(1588 445)"><path d="M12 0L23 24 13 18 0 24Z" fill="#3b8ed6"/><path d="M12 0L13 18 23 24Z" fill="#1d6fb5"/></g>
<g transform="translate(1623 447)"><path d="M1 19C1 5 22 5 22 19H17C17 12 6 12 6 19Z" class="b"/><path d="M10 19L15 11" stroke="#333" stroke-width="1.6"/><path d="M1 19H6M17 19H22" stroke="#333" stroke-width="1.2"/></g>
<g transform="translate(1657 447)"><rect x=".7" y=".7" width="22" height="18" fill="#fff" stroke="#555" stroke-width="1.2"/><text x="11.7" y="9.5" class="m n" style="font-size:12px;fill:#4a9ae0">123</text><path d="M.7 21H22.7" stroke="#777" stroke-width="1.2"/></g>
<!-- row 5 -->
<g transform="translate(1483 482)"><rect x=".7" y=".7" width="21.5" height="21.5" class="w" stroke-width="1.2"/><path d="M4 6H16M4 10H19M4 14H12" stroke="#2b7cc4" stroke-width="2"/><path d="M4 18H14" stroke="#aaa" stroke-width="1.5"/></g>
<g transform="translate(1518 482)"><rect x=".7" y=".7" width="21.5" height="18" class="w" stroke-width="1.2"/><path d="M5 13L9 5 12 13Z" fill="#37a35a"/><path d="M13 4H20L16.5 13Z" fill="#d13438"/><path d="M.7 21H22" stroke="#777" stroke-width="1.2"/></g>
<g transform="translate(1553 482)"><path d="M.7.7H22.5V12M10 22H.7V.7" fill="#fff" stroke="#555" stroke-width="1.2"/><rect x="1" y="1" width="21" height="4" fill="#888"/><rect x="4" y="8" width="4" height="3" fill="#888"/><rect x="4" y="14" width="4" height="3" fill="#888"/><path d="M10 9H23L18.5 15V22L14 20V15Z" fill="#fff" stroke="#444" stroke-width="1.2"/></g>
<g transform="translate(1588 482)"><rect x=".7" y=".7" width="22" height="21" class="w" stroke-width="1.2"/><rect x="1" y="1" width="22" height="4" fill="#999"/><path d="M1 10H23M1 16H23M8 5V22M15.5 5V22" stroke="#888" stroke-width="1"/></g>
<g transform="translate(1623 482)"><rect x=".7" y=".7" width="22" height="21" fill="#fff" stroke="#555" stroke-width="1.2"/><rect x="1" y="1" width="22" height="4" fill="#777"/><rect x="8" y="10" width="15" height="12" fill="#3b8ed6"/><rect x="1" y="16" width="7" height="6" fill="#3b8ed6"/><path d="M1 10H23M1 16H23M8 5V22M15.5 5V22" stroke="#fff" stroke-width="1"/></g>
<text x="1668" y="493" class="m" style="font-size:21px;font-weight:bold;fill:#1f7ac0">R</text>
<!-- row 6 -->
<text x="1494" y="527" class="m n" style="font-size:21px;font-weight:bold;fill:#2b88d0">Py</text>
<g transform="translate(1518 517)"><path class="k" d="M.7 0V21.5H23"/><path d="M2 4H17M2 10H12M2 16H8" stroke="#777" stroke-width="1.3"/><circle cx="19" cy="4" r="2.7" fill="#2b88d0"/><circle cx="14" cy="10" r="2.2" fill="#888"/><circle cx="10" cy="16" r="2" fill="#888"/></g>
<g transform="translate(1553 517)"><rect x="0" y="8" width="8" height="6" class="b"/><rect x="14" y="0" width="9" height="6" class="b"/><rect x="14" y="8" width="9" height="6" class="b"/><rect x="14" y="16" width="9" height="6" class="b"/><path d="M8 11H14M11 3V19M11 3H14M11 19H14" stroke="#444" stroke-width="1.1" fill="none"/></g>
<g transform="translate(1588 517)"><path d="M.7.7H22.5V17H10L5 22V17H.7Z" fill="#fff" stroke="#2b7cc4" stroke-width="1.3"/></g>
<g transform="translate(1623 517)"><path d="M4 .7H15L21 7V22H4V15M4 8V.7" fill="#fff" stroke="#555" stroke-width="1.2"/><circle cx="3.5" cy="11" r="2.2" fill="#2b88d0"/><path d="M8 11H17M8 15H15" stroke="#2b88d0" stroke-width="1.3"/></g>
<g transform="translate(1658 517)"><path d="M5 1H18V9C18 13 15 15 11.5 15S5 13 5 9Z" fill="#4a9ae0" stroke="#333" stroke-width="1"/><path d="M5 3H1C1 8 3 10 6 11M18 3H22C22 8 20 10 17 11M11.5 15V19" fill="none" stroke="#333" stroke-width="1.3"/><path d="M6 22V19H17V22Z" fill="#4a9ae0"/></g>
<!-- row 7 -->
<g transform="translate(1484 552)"><path d="M.7.7H13L20 8V23H.7Z" fill="#fff" stroke="#444" stroke-width="1.3"/><path d="M13 .7V8H20" fill="none" stroke="#444" stroke-width="1.1"/><rect x="4" y="16" width="3" height="5" fill="#333"/><rect x="8.5" y="13" width="3" height="8" fill="#333"/><rect x="13" y="10" width="3" height="11" fill="#333"/></g>
<g transform="translate(1518 552)"><rect x="1" y="4" width="22" height="14" class="w"/><text x="13" y="11" class="m n" style="font-size:12px;fill:#4a9ae0">123</text><path d="M1 21H23" stroke="#777" stroke-width="1.2"/><path d="M4 0H11L8 6H11L2 14 4 8H1Z" fill="#f5b83d" stroke="#c9741d" stroke-width=".8"/></g>
<g transform="translate(1553 552)"><rect x="3" y="9" width="8" height="7" class="w"/><rect x="14" y="2" width="8" height="7" class="w"/><rect x="3" y="17" width="7" height="6" class="w"/><path d="M11 12H23L18.5 17V23L15 21V17Z" fill="#fff" stroke="#444" stroke-width="1.2"/><path d="M4 0H11L8 6H11L2 14 4 8H1Z" fill="#f5b83d" stroke="#c9741d" stroke-width=".8"/></g>
<g transform="translate(1588 552)"><rect x="1" y="1" width="22" height="22" fill="#3b8ed6" stroke="#1d6fb5"/><path d="M6 23L8 14 15 10 18 3 23 3V12L15 16 13 23Z" fill="#e8f2fb"/><path d="M2 0H7V7L4.5 11 2 7Z" fill="#e07a20"/><circle cx="19" cy="20" r="3.5" fill="#e07a20"/><circle cx="20" cy="12" r="2" fill="#e07a20"/></g>
<g transform="translate(1623 552)" fill="none" stroke="#8e44ad" stroke-width="1.3"><path d="M11.5 .7L17 6 11.5 11.5 6 6Z"/><path d="M17 6L22.5 11.5 17 17 11.5 11.5Z"/><path d="M6 6L11.5 11.5 6 17 .7 11.5Z"/><path d="M11.5 11.5L17 17 11.5 22.5 6 17Z"/></g>
<g transform="translate(1658 552)" fill="none" stroke="#2b7cc4" stroke-width="1.4"><path d="M.7 1H16L23 11 16 21H1L8 11Z"/><path d="M4 18L15 5M9 19L19 8"/></g>
<text x="1494" y="592" class="m n" style="font-size:18px;letter-spacing:3px;font-weight:bold;fill:#555">...</text>

<!-- viz lower -->
<rect x="1469" y="622" width="225" height="1.3" fill="#dfdddb"/>
<text x="1484" y="643" class="f">Values</text>
<rect x="1474.5" y="659.5" width="212" height="34" fill="#fff" stroke="#c8c6c4" stroke-dasharray="3 2"/>
<text x="1487.5" y="677" class="f" textLength="133" lengthAdjust="spacingAndGlyphs">Add data fields here</text>
<text x="1484" y="718" class="f" style="font-weight:bold;fill:#444" textLength="87" lengthAdjust="spacingAndGlyphs">Drill through</text>
<text x="1484" y="749" class="f">Cross-report</text>
<rect x="1627.5" y="739.5" width="39.5" height="19.5" rx="9.7" fill="#fff" stroke="#8a8886"/>
<circle cx="1638" cy="749.5" r="5" fill="#605e5c"/>
<text x="1653.5" y="750" class="m n" style="font-size:11px;fill:#605e5c">Off</text>
<text x="1484" y="783" class="f">Keep all filters</text>
<rect x="1627" y="773" width="40" height="20" rx="10" fill="#117865"/>
<circle cx="1656" cy="783" r="5" fill="#fff"/>
<text x="1640" y="784" class="m n" style="font-size:11px;fill:#fff">On</text>
<rect x="1474.5" y="806.5" width="212" height="32" fill="#fff" stroke="#c8c6c4" stroke-dasharray="3 2"/>
<text x="1485" y="822" class="f" style="font-size:14px" textLength="188" lengthAdjust="spacingAndGlyphs">Add drill-through fields here</text>

<!-- data pane -->
<rect x="1701" y="257.5" width="213" height="30" rx="3" fill="#fff" stroke="#d6d4d2"/>
<path d="M1704 287.5H1911" stroke="#777" stroke-width="1"/>
<g fill="none" stroke="#555" stroke-width="1.3"><circle cx="1723" cy="271" r="6.5"/><path d="M1728 276L1733 281"/></g>
<text x="1743" y="274" style="font-size:16px;fill:#777">Search</text>
<use href="#arr" x="1718" y="313"/><use href="#tbl" x="1732" y="306"/><text x="1754" y="313.5" class="f">Dimcity</text>
<use href="#arr" x="1718" y="343"/><use href="#tbl" x="1732" y="336"/><text x="1754" y="343.5" class="f" textLength="88" lengthAdjust="spacingAndGlyphs">Dimcustomer</text>
<use href="#arr" x="1718" y="373"/><use href="#tbl" x="1732" y="366"/><text x="1754" y="373.5" class="f">DimDate</text>
<use href="#arr" x="1718" y="403"/><use href="#tbl" x="1732" y="396"/><text x="1754" y="403.5" class="f" textLength="91" lengthAdjust="spacingAndGlyphs">DimEmployee</text>
<use href="#arr" x="1718" y="433"/><use href="#tbl" x="1732" y="426"/><text x="1754" y="433.5" class="f" textLength="91" lengthAdjust="spacingAndGlyphs">DimStockItem</text>
<use href="#arr" x="1718" y="463"/><use href="#tbl" x="1732" y="456"/><text x="1754" y="463.5" class="f" textLength="53" lengthAdjust="spacingAndGlyphs">FactSale</text>

<!-- watermark -->
<g opacity=".17">
<text x="958" y="1005" class="m n" direction="rtl" style="font-family:'DejaVu Sans',sans-serif;font-weight:bold;font-size:80px;fill:#8a8a8a;stroke:#8a8a8a;stroke-width:5px" textLength="212" lengthAdjust="spacingAndGlyphs">نفذلي</text>
</g>
<text x="959" y="1062" class="m n" style="font-family:'DejaVu Sans',sans-serif;font-weight:bold;font-size:30px;fill:#8a8a8a;fill-opacity:.18" textLength="195" lengthAdjust="spacingAndGlyphs">nafezly.com</text>
</svg>
</body></html>
